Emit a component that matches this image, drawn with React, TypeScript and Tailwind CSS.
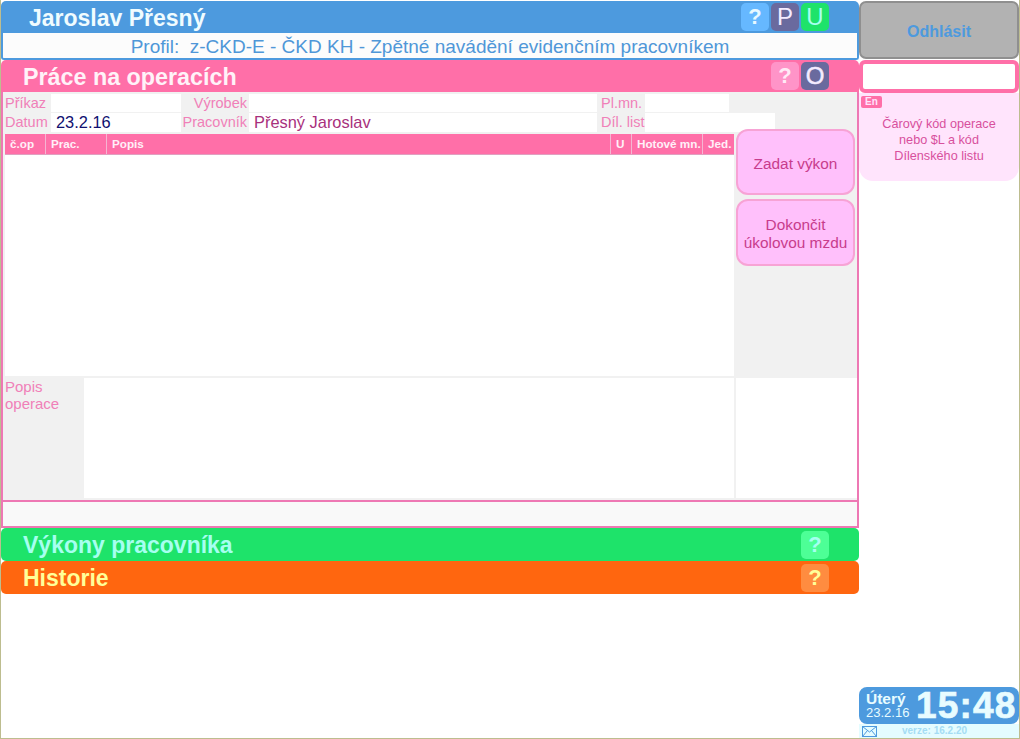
const font = "font-['Liberation_Sans',Arial,sans-serif]";

const SquareBtn = ({ label, className }: { label: string; className: string }) => (
  <div className={`flex h-[28px] w-[28px] items-center justify-center rounded-[5px] leading-none ${className}`}>
    {label}
  </div>
);

const Label = ({ text, className }: { text: string; className: string }) => (
  <div className={`flex h-full items-center text-[14.5px] leading-none text-[#f080b8] ${className}`}>{text}</div>
);

const columns = [
  { text: "č.op", cls: "w-[41px]" },
  { text: "Prac.", cls: "w-[61px]" },
  { text: "Popis", cls: "w-[504px]" },
  { text: "U", cls: "w-[21px]" },
  { text: "Hotové mn.", cls: "w-[71px]" },
  { text: "Jed.", cls: "flex-1" },
];

const ActionBtn = ({ lines, className }: { lines: string[]; className: string }) => (
  <div className={`flex w-[119px] flex-col items-center justify-center rounded-[12px] border-2 border-[#f7a3d5] bg-[#ffc0fb] text-[15.4px] leading-[18px] text-[#c83c8c] ${className}`}>
    {lines.map((l) => (
      <span key={l}>{l}</span>
    ))}
  </div>
);

const Accordion = ({ title, className, titleCls, btnCls }: { title: string; className: string; titleCls: string; btnCls: string }) => (
  <div className={`flex h-[33px] items-center justify-between rounded-[5px] pl-[22px] pr-[30px] ${className}`}>
    <span className={`pt-[2px] text-[23px] font-bold leading-none ${titleCls}`}>{title}</span>
    <SquareBtn label="?" className={`text-[22px] font-bold ${btnCls}`} />
  </div>
);

export default function App() {
  return (
    <div className={`${font} flex h-[739px] w-[1020px] border-x border-b border-[#bdbd8f] bg-white`}>
      <div className="flex w-[858px] flex-col pt-px">
        <div className="flex h-[32px] items-center justify-between rounded-t-[5px] bg-[#4d9ade] pl-[28px] pr-[30px]">
          <span className="pt-[2px] text-[23px] font-bold leading-none text-[#f0fcff]">Jaroslav Přesný</span>
          <div className="flex gap-[2px]">
            <SquareBtn label="?" className="bg-[#66b8ff] text-[22px] font-bold text-[#e8f8ff]" />
            <SquareBtn label="P" className="bg-[#6a6a9e] text-[24px] text-[#f4ecff]" />
            <SquareBtn label="U" className="bg-[#1ee36a] text-[24px] text-[#a8fff0]" />
          </div>
        </div>
        <div className="flex h-[27px] items-center justify-center rounded-b-[3px] border-x-2 border-b-2 border-[#4d9ade] bg-[#fcfcfc] pt-[2px] text-[19px] leading-none text-[#4f97d8]">
          <span className="whitespace-pre">Profil:  z-CKD-E - ČKD KH - Zpětné navádění evidenčním pracovníkem</span>
        </div>

        <div className="flex h-[32px] items-center justify-between rounded-t-[5px] bg-[#ff6fa8] pl-[22px] pr-[30px]">
          <span className="pt-[4px] text-[23.3px] font-bold leading-none text-[#fff2f8]">Práce na operacích</span>
          <div className="flex gap-[2px]">
            <SquareBtn label="?" className="bg-[#ff94c8] text-[22px] font-bold text-[#ffeaf6]" />
            <SquareBtn label="O" className="bg-[#6a6a9e] text-[24px] text-[#f4ecff] [-webkit-text-stroke:0.5px_#f4ecff]" />
          </div>
        </div>

        <div className="flex h-[436px] flex-col border-x-2 border-b-2 border-[#ee78b4] bg-[#f1f1f1]">
          <div className="mt-[2px] flex h-[18px]">
            <Label text="Příkaz" className="w-[48px] pl-[2px]" />
            <div className="h-full w-[130px] bg-white" />
            <Label text="Výrobek" className="w-[68px] justify-end pr-[2px]" />
            <div className="h-full w-[348px] bg-white" />
            <Label text="Pl.mn." className="w-[48px] pl-[4px]" />
            <div className="h-full w-[84px] bg-white" />
          </div>
          <div className="mt-px flex h-[19px]">
            <Label text="Datum" className="w-[48px] pl-[2px]" />
            <div className="flex h-full w-[130px] items-center bg-white pl-[5px] text-[16.4px] leading-none text-[#101070]">23.2.16</div>
            <Label text="Pracovník" className="w-[68px] justify-end pr-[2px]" />
            <div className="flex h-full w-[348px] items-center bg-white pl-[5px] text-[16.4px] leading-none text-[#a8307c]">Přesný Jaroslav</div>
            <Label text="Díl. list" className="w-[48px] pl-[4px]" />
            <div className="h-full w-[130px] bg-white" />
          </div>

          <div className="relative mt-[2px] flex h-[242px]">
            <div className="flex w-[731px] flex-col pl-[2px]">
              <div className="flex h-[21px] border-b border-[#e0a0c0] bg-[#ff6fa8]">
                {columns.map((c) => (
                  <div key={c.text} className={`flex items-center border-r border-[#f5b5d2] pl-[5px] text-[11.7px] font-bold leading-none text-[#fff0f8] last:border-r-0 ${c.cls}`}>
                    {c.text}
                  </div>
                ))}
              </div>
              <div className="flex-1 bg-white" />
            </div>
            <div className="absolute left-[733px] top-[-5px] flex flex-col gap-[4px]">
              <ActionBtn lines={["Zadat výkon"]} className="h-[66px] pt-[3px]" />
              <ActionBtn lines={["Dokončit", "úkolovou mzdu"]} className="h-[67px] pt-[2px]" />
            </div>
          </div>

          <div className="mt-[2px] flex h-[120px]">
            <div className="w-[81px] pl-[2px] text-[15px] leading-[17px] text-[#f080b8]">
              Popis
              <br />
              operace
            </div>
            <div className="w-[650px] bg-white" />
            <div className="ml-[2px] flex-1 bg-white" />
          </div>

          <div className="mt-[2px] flex-1 border-t-2 border-[#ee78b4] bg-[#f9f9f9]" />
        </div>

        <Accordion title="Výkony pracovníka" className="bg-[#1ee36a]" titleCls="text-[#a6fff0]" btnCls="bg-[#4dff96] text-[#a6fff0]" />
        <Accordion title="Historie" className="bg-[#ff660f]" titleCls="text-[#ffff99]" btnCls="bg-[#ff8c40] text-[#ffff99]" />
      </div>

      <div className="flex w-[160px] flex-col pt-px">
        <div className="flex h-[58px] items-center justify-center rounded-[7px] border-2 border-[#8f8f8f] bg-[#b2b2b2] pt-[3px] text-[16px] font-bold leading-none text-[#4d9ade]">
          Odhlásit
        </div>
        <div className="mt-px h-[33px] rounded-[6px] border-[4px] border-[#ff6fa8] bg-white" />
        <div className="relative h-[88px] rounded-b-[14px] bg-[#ffe4fc] pt-[23px] text-center text-[12.7px] leading-[16px] text-[#d8509c]">
          <span className="absolute left-[2px] top-[3px] rounded-[2px] bg-[#ff6fa8] px-[4px] text-[10px] font-bold leading-[12px] text-[#ffe4fc]">En</span>
          Čárový kód operace
          <br />
          nebo $L a kód
          <br />
          Dílenského listu
        </div>
        <div className="mt-auto flex h-[51px] flex-col">
          <div className="flex h-[37px] items-center rounded-[8px] bg-[#4d9ade] pl-[7px]">
            <div className="flex w-[50px] flex-col gap-[1px] text-[#e8fcff]">
              <span className="text-[15.5px] font-bold leading-[13px]">Úterý</span>
              <span className="text-[13px] leading-[13px]">23.2.16</span>
            </div>
            <span className="text-[37px] font-bold leading-none tracking-[1.2px] text-[#e8fcff] [-webkit-text-stroke:0.7px_#e8fcff]">15:48</span>
          </div>
          <div className="flex h-[14px] items-center bg-[#e4fcff] pl-[3px]">
            <svg width="15" height="11" viewBox="0 0 15 11" fill="none" stroke="#4d9ade" strokeWidth="1">
              <rect x="0.5" y="0.5" width="14" height="10" />
              <path d="M0.5 0.5L7.5 6L14.5 0.5M0.5 10.5L5.5 4.5M14.5 10.5L9.5 4.5" />
            </svg>
            <span className="ml-[25px] text-[10px] font-bold leading-none text-[#a4dcf4]">verze: 16.2.20</span>
          </div>
        </div>
      </div>
    </div>
  );
}
